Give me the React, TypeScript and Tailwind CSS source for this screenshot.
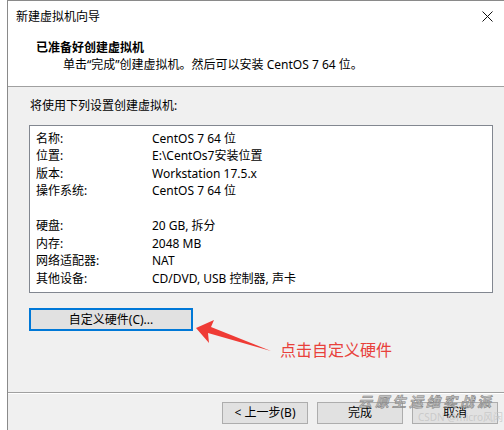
import React from "react";

const font = { fontFamily: '"Noto Sans", "Noto Sans CJK SC", sans-serif' };

const rows: [string, string][] = [
  ["名称:", "CentOS 7 64 位"],
  ["位置:", "E:\\CentOs7安装位置"],
  ["版本:", "Workstation 17.5.x"],
  ["操作系统:", "CentOS 7 64 位"],
  ["", ""],
  ["硬盘:", "20 GB, 拆分"],
  ["内存:", "2048 MB"],
  ["网络适配器:", "NAT"],
  ["其他设备:", "CD/DVD, USB 控制器, 声卡"],
];

function WinButton({ children }: { children: React.ReactNode }) {
  return (
    <div className="w-[86px] h-[22px] border border-[#adadad] bg-[#e1e1e1] flex items-center justify-center text-[12px] text-black">
      {children}
    </div>
  );
}

export default function App() {
  return (
    <div className="w-[504px] h-[430px] bg-white overflow-hidden" style={font}>
      <div className="relative ml-[7px] h-[430px] border-l border-t border-[#8a8a8a] bg-[#f0f0f0] flex flex-col text-[12px] text-black leading-none">
        {/* header */}
        <div className="h-[86px] bg-white border-b border-[#a0a0a0] flex flex-col">
          <div className="h-[31px] flex items-center justify-between pl-[8px] pr-[10px]">
            <span>新建虚拟机向导</span>
            <svg width="11" height="11" viewBox="0 0 11 11" className="mr-[1px]">
              <path d="M0.5 0.5L10.5 10.5M10.5 0.5L0.5 10.5" stroke="#111" strokeWidth="1" />
            </svg>
          </div>
          <div className="pl-[28px] mt-[10px] font-bold">已准备好创建虚拟机</div>
          <div className="pl-[55px] mt-[5px]">单击“完成”创建虚拟机。然后可以安装 CentOS 7 64 位。</div>
        </div>

        {/* body */}
        <div className="flex-1 flex flex-col pl-[21px] pr-[4px]">
          <div className="mt-[13px] pl-[1px]">将使用下列设置创建虚拟机:</div>
          <div className="mt-[13px] w-[464px] h-[168px] border border-[#828790] bg-white pt-[4px] pl-[6px]">
            {rows.map(([k, v], i) => (
              <div key={i} className="h-[17.5px] flex items-center">
                <span className="w-[116px]">{k}</span>
                <span>{v}</span>
              </div>
            ))}
          </div>
          <div className="mt-[15px] flex items-center">
            <div className="w-[164px] h-[23px] border-2 border-[#0078d7] bg-[#e1e1e1] flex items-center justify-center">
              自定义硬件(C)...
            </div>
          </div>
        </div>

        {/* footer */}
        <div className="h-[38px] border-t border-[#a0a0a0] shadow-[inset_0_1px_0_#ffffff] flex items-start justify-end gap-[9px] pt-[9px] pr-[6px]">
          <WinButton>&lt; 上一步(B)</WinButton>
          <WinButton>完成</WinButton>
          <WinButton>取消</WinButton>
        </div>

        {/* annotation arrow */}
        <svg className="absolute left-0 top-0 pointer-events-none" width="497" height="430">
          <polygon
            points="188,327 206,319 203,326 263,350 200,332 201,342"
            fill="#ef3b35"
          />
        </svg>
        <div className="absolute left-[272px] top-[341px] text-[16px] text-[#e8413b]">点击自定义硬件</div>

        {/* watermark */}
        <div
          className="absolute left-[350px] top-[393px] text-[14px] font-bold italic text-[#a0a0a0]/60 tracking-[3px] pointer-events-none"
          style={{ fontFamily: '"Noto Sans CJK SC", sans-serif', WebkitTextStroke: "0.5px #808080" }}
        >
          云原生运维实战派
        </div>
        <div className="absolute left-[410px] top-[410px] text-[10px] leading-[12px] text-[#c4c4c4]/80 pointer-events-none">CSDN @micro风闲</div>
      </div>
    </div>
  );
}
